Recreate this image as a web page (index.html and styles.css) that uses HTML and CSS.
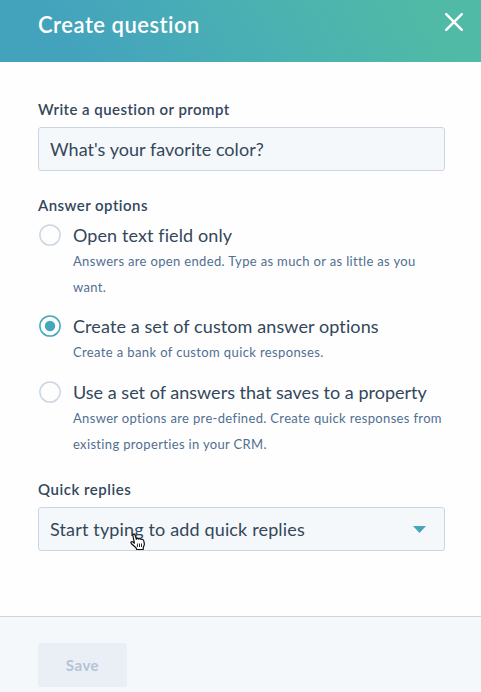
FILE: index.html
```
<!DOCTYPE html>
<html lang="en">
<head>
<meta charset="utf-8">
<title>Create question</title>
<link rel="stylesheet" href="styles.css">
</head>
<body>
<div class="panel">
  <header class="header">
    <h1 class="title">Create question</h1>
    <button class="close" aria-label="Close">
      <svg width="18" height="18" viewBox="0 0 18 18"><path d="M1.2 1.2 16.8 16.8M16.8 1.2 1.2 16.8" fill="none" stroke="#fff" stroke-width="2.4" stroke-linecap="round"/></svg>
    </button>
  </header>
  <main class="body">
    <div class="label label-prompt">Write a question or prompt</div>
    <div class="field"><span class="value value-question">What's your favorite color?</span></div>
    <div class="label label-options">Answer options</div>
    <div class="option">
      <svg class="radio" width="22" height="22" viewBox="0 0 22 22"><circle class="ring" cx="11" cy="11" r="10.1"/></svg>
      <div class="option-text">
        <div class="option-title t-open">Open text field only</div>
        <div class="help h-open">Answers are open ended. Type as much or as little as you<br>want.</div>
      </div>
    </div>
    <div class="option">
      <svg class="radio checked" width="22" height="22" viewBox="0 0 22 22"><circle class="ring" cx="11" cy="11" r="10.1"/><circle class="dot" cx="11" cy="11" r="5.2"/></svg>
      <div class="option-text">
        <div class="option-title t-custom">Create a set of custom answer options</div>
        <div class="help h-custom">Create a bank of custom quick responses.</div>
      </div>
    </div>
    <div class="option">
      <svg class="radio" width="22" height="22" viewBox="0 0 22 22"><circle class="ring" cx="11" cy="11" r="10.1"/></svg>
      <div class="option-text">
        <div class="option-title t-property">Use a set of answers that saves to a property</div>
        <div class="help h-property">Answer options are pre-defined. Create quick responses from<br>existing properties in your CRM.</div>
      </div>
    </div>
    <div class="label label-replies">Quick replies</div>
    <div class="field select">
      <span class="value value-replies">Start typing to add quick replies</span>
      <svg class="caret" width="13" height="7" viewBox="0 0 13 7"><path d="M0 0H13L6.5 7Z" fill="#45a7bd"/></svg>
      <svg class="cursor" width="16" height="18" viewBox="0 0 16 18"><path d="M4.4 10.2 2.9 2.6C2.5 1 4.6.4 5.1 2L6.4 6.2C7 5.2 8.2 5.2 8.7 6.1 9.5 5.2 10.8 5.5 11.2 6.5 12.2 5.9 13.5 6.5 13.7 7.7L14.3 10.5C14.6 12.2 13.6 13.3 13.3 14.5L13.2 16.5H6.7L6 14.8 1.5 10.7C.3 9.4 1.5 8 2.8 8.9Z" fill="#fff" stroke="#111" stroke-width="1.2" stroke-linejoin="round"/><path d="M7.4 10.5V14M9.5 10.5V14M11.5 10.5V14" stroke="#111" stroke-width=".9"/></svg>
    </div>
  </main>
  <footer class="footer"><button class="save" disabled>Save</button></footer>
</div>
</body>
</html>
```
FILE: styles.css
```
* { box-sizing: border-box; }
body { margin: 0; font-family: Lato, "Liberation Sans", sans-serif; color: #33475b; background: #fefefe; }
.panel { width: 481px; height: 692px; display: flex; flex-direction: column; overflow: hidden; white-space: nowrap; }
.header { height: 62px; flex: none; display: flex; justify-content: space-between; padding: 9px 18px 0 38px; background: linear-gradient(60deg, #43a3bd 15%, #4aafb4 50%, #50baa6 88%); }
.title { margin: 0; font-size: 22px; line-height: 32px; font-weight: 600; color: #fff; letter-spacing: .5px; }
.close { width: 18px; height: 18px; margin-top: 4px; padding: 0; border: 0; background: none; display: flex; }
.body { flex: 1; padding: 38px 36px 0 38px; }
.label { height: 20px; font-size: 15px; line-height: 18px; font-weight: 600; letter-spacing: .45px; }
.label-options { margin-top: 25px; }
.label-replies { margin-top: 20px; letter-spacing: .53px; }
.field { position: relative; height: 44px; margin-top: 7px; padding: 0 18px 0 11px; border: 1px solid #cbd6e2; border-radius: 3px; background: #f5f8fa; display: flex; align-items: center; justify-content: space-between; }
.value { font-size: 18px; line-height: 24px; }
.value-question { letter-spacing: .04px; }
.value-replies { letter-spacing: .15px; }
.option { display: flex; gap: 12px; padding-left: 1px; }
.radio { flex: none; margin-top: 8px; }
.ring { fill: none; stroke: #cbd6e2; stroke-width: 1.5; }
.checked .ring { stroke: #45a7bd; }
.dot { fill: #45a7bd; }
.option-title { padding-top: 6px; height: 32px; font-size: 18px; line-height: 26px; letter-spacing: .1px; }
.t-property { letter-spacing: .01px; }
.help { font-size: 13px; line-height: 26px; color: #516f90; letter-spacing: .34px; }
.h-custom { letter-spacing: .375px; }
.option:has(.h-open) { height: 91px; }
.option:has(.h-custom) { height: 66px; }
.option:has(.h-property) { height: 87px; }
.cursor { position: absolute; left: 91px; top: 25px; }
.footer { height: 76px; flex: none; padding: 26px 38px 0; border-top: 1px solid #cbd6e2; background: #f5f8fa; }
.save { display: block; width: 89px; height: 44px; padding: 0 0 1px; border: 0; border-radius: 3px; background: #eaeff6; color: #b4c3d6; font: 700 15px/42px Lato, sans-serif; letter-spacing: .5px; }
```
